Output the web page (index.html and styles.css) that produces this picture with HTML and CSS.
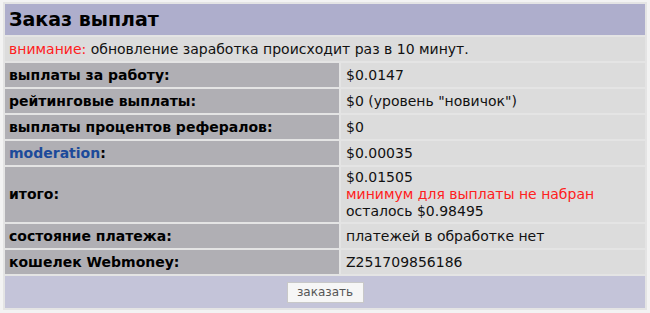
FILE: index.html
```html
<!DOCTYPE html>
<html>
<head>
<meta charset="utf-8">
<link rel="stylesheet" href="styles.css">
</head>
<body>
<div class="box">
<table class="pay">
  <tr><td colspan="2" class="head">Заказ выплат</td></tr>
  <tr><td colspan="2" class="notice"><span class="red">внимание:</span> обновление заработка происходит раз в 10 минут.</td></tr>
  <tr><td class="lbl">выплаты за работу:</td><td class="val">$0.0147</td></tr>
  <tr><td class="lbl">рейтинговые выплаты:</td><td class="val">$0 (уровень "новичок")</td></tr>
  <tr><td class="lbl">выплаты процентов рефералов:</td><td class="val">$0</td></tr>
  <tr><td class="lbl"><a class="link" href="#">moderation</a>:</td><td class="val">$0.00035</td></tr>
  <tr><td class="lbl">итого:</td><td class="val tall">$0.01505<br><span class="red">минимум для выплаты не набран</span><br>осталось $0.98495</td></tr>
  <tr><td class="lbl">состояние платежа:</td><td class="val">платежей в обработке нет</td></tr>
  <tr><td class="lbl">кошелек Webmoney:</td><td class="val">Z251709856186</td></tr>
  <tr><td colspan="2" class="foot"><button class="btn">заказать</button></td></tr>
</table>
</div>
</body>
</html>
```
FILE: styles.css
```css
html, body {
  margin: 0;
  padding: 0;
  background: #f3f3f3;
}
body {
  font-family: "DejaVu Sans", Verdana, sans-serif;
  font-size: 14px;
  color: #111;
}
.box {
  margin: 2px 3px;
  width: 644px;
}
.pay {
  width: 644px;
  border-collapse: separate;
  border-spacing: 2px;
  background: #e4e4e4;
  border: 0;
}
.pay td {
  padding: 0 4px;
  height: 24px;
  line-height: 17px;
}
.pay td.val {
  padding-left: 5px;
}
.head {
  background: #aeaecc;
  font-size: 19px;
  font-weight: bold;
  height: 31px !important;
  color: #000;
}
.notice {
  background: #dcdcdc;
}
.red {
  color: #ff2020;
}
.lbl {
  background: #b0afb4;
  font-weight: bold;
  width: 326px;
  color: #000;
}
.val {
  background: #dcdcdc;
}
.pay td.tall {
  padding-top: 2px;
  padding-bottom: 2px;
}
.link {
  color: #1c4a9a;
  text-decoration: none;
}
.pay td.foot {
  background: #c4c4d9;
  height: 32px;
  text-align: center;
}
.btn {
  font-family: "DejaVu Sans", Verdana, sans-serif;
  font-size: 12px;
  color: #555;
  background: #f6f6f6;
  border: 1px solid #c8c8c8;
  width: 77px;
  height: 21px;
  padding: 0;
}
```
